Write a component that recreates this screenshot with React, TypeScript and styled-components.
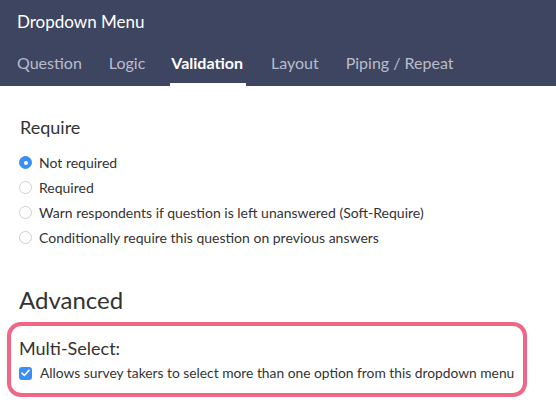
import React from 'react';
import styled, { createGlobalStyle } from 'styled-components';

const GlobalStyle = createGlobalStyle`
    body {
        margin: 0;
        background: #ffffff;
        font-family: Lato, 'Open Sans', sans-serif;
        color: #333333;
    }
`;

const tabs = ['Question', 'Logic', 'Validation', 'Layout', 'Piping / Repeat'];
const requireOptions = [
    'Not required',
    'Required',
    'Warn respondents if question is left unanswered (Soft-Require)',
    'Conditionally require this question on previous answers',
];

function App() {
    return (
        <>
            <GlobalStyle />
            <Page>
                <Header>
                    <Title>Dropdown Menu</Title>
                    <TabBar>
                        {tabs.map((tab) => (
                            <Tab key={tab} active={tab === 'Validation'}>
                                {tab}
                            </Tab>
                        ))}
                    </TabBar>
                </Header>
                <Body>
                    <SectionTitle>Require</SectionTitle>
                    <RadioList>
                        {requireOptions.map((option, i) => (
                            <RadioRow key={option}>
                                <Radio checked={i === 0} />
                                <OptionText>{option}</OptionText>
                            </RadioRow>
                        ))}
                    </RadioList>
                    <BigTitle>Advanced</BigTitle>
                    <Highlight>
                        <SubTitle>Multi-Select:</SubTitle>
                        <CheckRow>
                            <CheckBox>
                                <svg width="9" height="8" viewBox="0 0 9 8">
                                    <path
                                        d="M1 4.2 L3.4 6.5 L8 1.3"
                                        fill="none"
                                        stroke="#ffffff"
                                        strokeWidth="1.6"
                                        strokeLinecap="round"
                                        strokeLinejoin="round"
                                    />
                                </svg>
                            </CheckBox>
                            <CheckText>
                                Allows survey takers to select more than one option from this dropdown menu
                            </CheckText>
                        </CheckRow>
                    </Highlight>
                </Body>
            </Page>
        </>
    );
}

const Page = styled.div`
    width: 556px;
    height: 410px;
    overflow: hidden;
`;

const Header = styled.div`
    background: #3e4560;
    height: 86px;
    padding: 11px 0 0 17px;
    box-sizing: border-box;
    display: flex;
    flex-direction: column;
`;

const Title = styled.div`
    font-size: 17px;
    line-height: 22px;
    color: #ffffff;
`;

const TabBar = styled.div`
    display: flex;
    gap: 27px;
    margin-top: auto;
`;

const Tab = styled.div<{ active?: boolean }>`
    font-size: 16px;
    line-height: 20px;
    padding-bottom: 13px;
    color: ${(props) => (props.active ? '#ffffff' : '#b9bdcb')};
    font-weight: ${(props) => (props.active ? 700 : 400)};
    box-shadow: ${(props) => (props.active ? 'inset 0 -3px 0 #ffffff' : 'none')};
    margin: 0 ${(props) => (props.active ? '-2px' : '0')};
    padding-left: ${(props) => (props.active ? '1px' : '0')};
    padding-right: ${(props) => (props.active ? '3px' : '0')};
`;

const Body = styled.div`
    padding: 30px 0 0 19px;
`;

const SectionTitle = styled.div`
    font-size: 18px;
    line-height: 22px;
    color: #333333;
    margin-left: 1px;
`;

const RadioList = styled.div`
    display: flex;
    flex-direction: column;
    margin-top: 12px;
`;

const RadioRow = styled.div`
    display: flex;
    align-items: center;
    gap: 7px;
    height: 25px;
`;

const Radio = styled.span<{ checked?: boolean }>`
    width: 13px;
    height: 13px;
    border-radius: 50%;
    box-sizing: border-box;
    flex: none;
    background: ${(props) => (props.checked ? '#3a8ef5' : '#ffffff')};
    border: 1px solid ${(props) => (props.checked ? '#3a8ef5' : '#cfcfcf')};
    display: flex;
    align-items: center;
    justify-content: center;
    &::after {
        content: '';
        width: 4px;
        height: 4px;
        border-radius: 50%;
        background: #ffffff;
        display: ${(props) => (props.checked ? 'block' : 'none')};
    }
`;

const OptionText = styled.span`
    font-size: 14px;
    line-height: 18px;
    color: #333333;
`;

const CheckText = styled(OptionText)`
    font-size: 13.8px;
`;

const BigTitle = styled.div`
    font-size: 24px;
    line-height: 30px;
    color: #333333;
    margin-top: 35px;
`;

const Highlight = styled.div`
    margin: 7px 0 0 -12px;
    width: 520px;
    height: 75px;
    box-sizing: border-box;
    border: 4px solid #ef6686;
    border-radius: 14px;
    padding: 10px 0 0 8px;
`;

const SubTitle = styled.div`
    font-size: 18px;
    line-height: 24px;
    color: #333333;
`;

const CheckRow = styled.div`
    display: flex;
    align-items: center;
    gap: 8px;
    margin-top: 4px;
`;

const CheckBox = styled.span`
    width: 13px;
    height: 13px;
    border-radius: 3px;
    background: #3a8ef5;
    flex: none;
    display: flex;
    align-items: center;
    justify-content: center;
`;

export default App;
